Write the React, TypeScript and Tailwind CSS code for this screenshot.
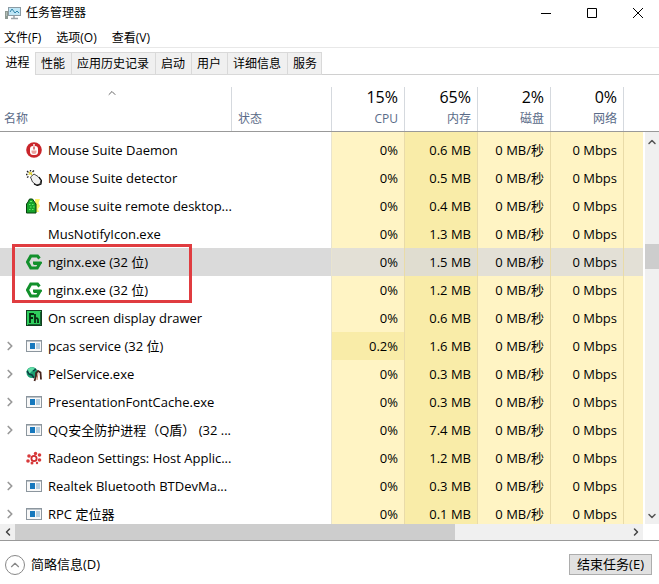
import type { ReactNode } from "react"
import { ChevronDown, ChevronLeft, ChevronRight, ChevronUp } from "lucide-react"

type IconName = "daemon" | "detector" | "remote" | "nginx" | "display" | "app" | "pel" | "radeon" | "none"

type Process = {
	name: string
	icon: IconName
	memory: string
	cpu?: string
	expandable?: boolean
	selected?: boolean
	marked?: boolean
}

const menus = ["文件(F)", "选项(O)", "查看(V)"]

const tabs = ["性能", "应用历史记录", "启动", "用户", "详细信息", "服务"]

const usage = [
	{ label: "CPU", value: "15%" },
	{ label: "内存", value: "65%" },
	{ label: "磁盘", value: "2%" },
	{ label: "网络", value: "0%" },
]

const processes: Process[] = [
	{ name: "Mouse Suite Daemon", icon: "daemon", memory: "0.6 MB" },
	{ name: "Mouse Suite detector", icon: "detector", memory: "0.5 MB" },
	{ name: "Mouse suite remote desktop...", icon: "remote", memory: "0.4 MB" },
	{ name: "MusNotifyIcon.exe", icon: "none", memory: "1.3 MB" },
	{ name: "nginx.exe (32 位)", icon: "nginx", memory: "1.5 MB", selected: true, marked: true },
	{ name: "nginx.exe (32 位)", icon: "nginx", memory: "1.2 MB" },
	{ name: "On screen display drawer", icon: "display", memory: "0.6 MB" },
	{ name: "pcas service (32 位)", icon: "app", memory: "1.6 MB", cpu: "0.2%", expandable: true },
	{ name: "PelService.exe", icon: "pel", memory: "0.3 MB", expandable: true },
	{ name: "PresentationFontCache.exe", icon: "app", memory: "0.3 MB", expandable: true },
	{ name: "QQ安全防护进程（Q盾） (32 ...", icon: "app", memory: "7.4 MB", expandable: true },
	{ name: "Radeon Settings: Host Applic...", icon: "radeon", memory: "1.2 MB" },
	{ name: "Realtek Bluetooth BTDevMa...", icon: "app", memory: "0.3 MB", expandable: true },
	{ name: "RPC 定位器", icon: "app", memory: "0.1 MB", expandable: true },
]

const drawings: Record<IconName, ReactNode> = {
	none: null,
	daemon: (
		<>
			<circle cx="8" cy="8" r="7.8" fill="#c9252b" />
			<rect x="4" y="4" width="8" height="9" rx="3" fill="#fff" />
			<path d="M5.500 8.500h5v1.500a2.500 2 0 0 1-5 0z" fill="#eba09c" />
			<path d="M8 2v2" stroke="#fff" strokeWidth="1.400" />
			<path d="M8 4.500v3" stroke="#c9252b" strokeWidth="1.200" />
		</>
	),
	detector: (
		<>
			<path d="M4.500 7 8 4l4 2.500 3 4-1 3.500-3.500 1-4-3z" fill="#f1f1f1" stroke="#444" />
			<path d="M13 7l2.500 3.500-.5 3.500-3.500 1.500-3.500-1.500" fill="none" stroke="#111" strokeWidth="1.200" />
			<path d="M1 1l1.500 1.500M4.500 0v1.500M8 .5 6.500 2M0 4.500h1.500M1 7.500l1.500-1" stroke="#222" strokeWidth="1.300" />
			<path d="M3 2l3 3M2.500 4.500 6 2.500" stroke="#d8c928" strokeWidth="1.300" />
		</>
	),
	remote: (
		<>
			<path d="M9 1h5l-1.500 4L14 8l-2 3 1 3H9z" fill="#fbf56a" />
			<path d="M3.500 1h3l2 3 1.500 2v9H.5V6L2 4z" fill="#16a32b" stroke="#073f0d" />
			<path d="M4 3h2v1H4zM3 6h1.500v1H3zM6 6h1.500v1H6zM4 8.500h1.500v1H4zM7 8.500h1.500v1H7zM3 11h1.500v1H3zM6 11h1.500v1H6z" fill="#65ec65" />
		</>
	),
	nginx: (
		<>
			<path d="M13.500 4.500 11.500 2H4.800L1.500 8l3.300 6h6.400l2.600-4.500H7.500" fill="none" stroke="#12902c" strokeWidth="3" />
			<path d="M7 7.500h8.500v2.500H7z" fill="#12902c" />
		</>
	),
	display: (
		<>
			<rect x=".5" y=".5" width="15" height="15" fill="#2fcf5d" stroke="#123d20" />
			<path d="M2 14.500h12.500V2" fill="none" stroke="#12602c" />
			<path d="M4 13V4h4M4 8h3M9 4v9M9 9q3-2 3 1v3" fill="none" stroke="#052c10" strokeWidth="1.800" />
		</>
	),
	app: (
		<>
			<rect x=".5" y="2.500" width="15" height="11" fill="#f8f8f8" stroke="#8c969e" />
			<path d="M1 3.500h14" stroke="#bcc3c9" />
			<rect x="4" y="5" width="5" height="6" fill="#1678bd" />
			<path d="M10 6h4M10 8h4M10 10h4" stroke="#75a5c8" />
		</>
	),
	pel: (
		<>
			<circle cx="6" cy="6.500" r="5.500" fill="#1c9f72" />
			<path d="M2 3l4-2 3 2-3 2-3 3z" fill="#65e0a9" />
			<path d="M1 5l2 3 3 1 2 3M7 5l3-2" fill="none" stroke="#0b3f43" strokeWidth="1.500" />
			<path d="M8.500 15 10 10V7l2-2 2.500 1.500.5 7" fill="none" stroke="#45241d" strokeWidth="1.800" />
			<path d="M11 14l1-7" fill="none" stroke="#c77b60" />
		</>
	),
	radeon: (
		<>
			<circle cx="8" cy="8.500" r="2.600" fill="none" stroke="#d02b2e" strokeWidth="1.800" />
			<g fill="#d83a3b">
				<circle cx="3" cy="6" r="1.800" />
				<circle cx="2" cy="11" r="1.800" />
				<circle cx="6" cy="13" r="1.500" />
				<circle cx="9.500" cy="3.500" r="1.700" />
				<circle cx="13.500" cy="5" r="1.800" />
				<circle cx="13.500" cy="10" r="1.800" />
				<circle cx="11" cy="13" r="1.200" />
			</g>
		</>
	),
}

function ProcessIcon({ name }: { name: IconName }) {
	return (
		<svg viewBox="0 0 16 16" className="size-4 shrink-0" aria-hidden="true">
			{drawings[name]}
		</svg>
	)
}

function TitleBar() {
	return (
		<header className="flex h-[26px] shrink-0 items-center overflow-hidden">
			<svg viewBox="0 0 16 16" className="ml-[5px] size-4" aria-hidden="true">
				<rect x="3.500" y="2.500" width="12" height="8" fill="#bfe6f6" stroke="#8b9ba4" />
				<path d="M5 7l2-3 3 4 2-2 2 2" fill="none" stroke="#2f83a8" />
				<path d="M9 11v2M6 13.500h7" stroke="#9aa3a8" strokeWidth="1.500" />
				<rect x="0" y="6" width="3" height="8" fill="#8e9a93" />
				<path d="M1 8h1M1 10h1" stroke="#d9e2dc" />
			</svg>
			<h1 className="ml-[5px] flex-1 text-xs">任务管理器</h1>
			<div className="-mr-0.5 flex">
				<button className="flex h-6 w-[46px] items-center justify-center" aria-label="最小化">
					<svg viewBox="0 0 10 10" className="size-2.5"><path d="M0 5.500h10" stroke="#000" /></svg>
				</button>
				<button className="flex h-6 w-[46px] items-center justify-center" aria-label="最大化">
					<svg viewBox="0 0 10 10" className="size-2.5"><path d="M.5.500h9v9h-9z" fill="none" stroke="#000" /></svg>
				</button>
				<button className="flex h-6 w-[46px] items-center justify-center" aria-label="关闭">
					<svg viewBox="0 0 10 10" className="size-2.5"><path d="M0 0l10 10M10 0 0 10" stroke="#000" /></svg>
				</button>
			</div>
		</header>
	)
}

function ProcessRow({ process, first }: { process: Process; first: boolean }) {
	const pad = first ? "h-8 pt-1" : "h-7"
	const light = process.selected ? "bg-[#e3e0d6]" : "bg-[#fff4c4]"
	const dark = process.selected ? "bg-[#e0ddd0]" : "bg-[#f9eca8]"
	const plain = process.selected ? "bg-[#dadada]" : ""
	const value = `${pad} border-r border-[#e9dba8] pr-1.5 text-right whitespace-nowrap`

	return (
		<tr>
			<td className={`${pad} ${plain} relative`}>
				<div className="flex items-center">
					<div className="flex w-[26px] shrink-0 items-center pl-[3px]">
						{process.expandable && (
							<button aria-label={`展开 ${process.name}`}>
								<ChevronRight className="size-3.5 text-[#999]" strokeWidth={3} />
							</button>
						)}
					</div>
					<ProcessIcon name={process.icon} />
					<span className="ml-1.5 whitespace-nowrap">{process.name}</span>
				</div>
				{/* red frame round both nginx rows */}
				{process.marked && (
					<div className="pointer-events-none absolute -top-1 left-3 z-10 h-[59px] w-[180px] border-3 border-[#e03c40]" />
				)}
			</td>
			<td className={`${pad} ${plain} border-r border-[#e9e4cf]`} />
			<td className={`${value} ${process.cpu ? dark : light}`}>{process.cpu ?? "0%"}</td>
			<td className={`${value} ${dark}`}>{process.memory}</td>
			<td className={`${value} ${light}`}>0 MB/秒</td>
			<td className={`${value} ${light}`}>0 Mbps</td>
			<td className={`${pad} ${light}`} />
		</tr>
	)
}

function ProcessTable() {
	return (
		<div className="flex min-h-0 flex-1 overflow-hidden">
			<div className="min-w-0 flex-1">
				<table className="w-full table-fixed border-separate border-spacing-0 text-[13px] leading-5">
					<colgroup>
						<col className="w-[232px]" />
						<col className="w-[100px]" />
						<col className="w-[73px]" />
						<col className="w-[73px]" />
						<col className="w-[73px]" />
						<col className="w-[73px]" />
						<col />
					</colgroup>
					<thead className="text-xs text-[#5a6b88]">
						<tr>
							<th className="h-[57px] border-b border-[#999] p-0 align-bottom font-normal">
								<div className="flex h-11 flex-col justify-between border-r border-[#d5d9de] pb-0.5 pl-1 text-left">
									<ChevronUp className="mr-3 size-3 self-center text-[#666]" />
									<span className="leading-5">名称</span>
								</div>
							</th>
							<th className="border-b border-[#999] p-0 align-bottom font-normal">
								<div className="flex h-11 items-end border-r border-[#d5d9de] pb-0.5 pl-1.5 leading-5">状态</div>
							</th>
							{usage.map((item) => (
								<th key={item.label} className="border-b border-[#999] p-0 align-bottom font-normal">
									<div className="flex h-11 flex-col items-end justify-between border-r border-[#d5d9de] pr-1.5 pb-0.5">
										<span className="text-base leading-5 text-black">{item.value}</span>
										<span className="leading-5">{item.label}</span>
									</div>
								</th>
							))}
							<th className="border-b border-[#999]" />
						</tr>
					</thead>
					<tbody>
						{processes.map((process, i) => (
							<ProcessRow key={i} process={process} first={i === 0} />
						))}
					</tbody>
				</table>
			</div>
			{/* vertical scroll bar */}
			<div className="flex w-4 shrink-0 flex-col">
				<div className="h-[57px] shrink-0 border-b border-[#999]" />
				<div className="ml-0.5 flex flex-1 flex-col items-center bg-[#f0f0f0]">
					<button className="pt-1" aria-label="向上滚动">
						<ChevronUp className="size-3 text-[#555]" strokeWidth={3} />
					</button>
					<div className="flex-[95]" />
					<div className="h-[25px] w-full bg-[#cdcdcd]" />
					<div className="flex-[238]" />
					<button className="pb-0.5" aria-label="向下滚动">
						<ChevronDown className="size-3 text-[#555]" strokeWidth={3} />
					</button>
				</div>
			</div>
		</div>
	)
}

function App() {
	return (
		<div className="flex h-screen flex-col overflow-hidden bg-white font-['Open_Sans','Noto_Sans_CJK_SC',sans-serif] text-black">
			<TitleBar />
			<nav className="flex h-[22px] shrink-0 items-center gap-[15px] border-b border-[#e8e8e8] pt-0.5 pl-1 text-xs">
				{menus.map((menu) => (
					<button key={menu}>{menu}</button>
				))}
			</nav>
			<div className="flex h-[27px] shrink-0 items-end text-xs" role="tablist">
				<button role="tab" aria-selected="true" className="h-[23px] w-9 border-r border-[#d9d9d9] pb-0.5">进程</button>
				{tabs.map((tab) => (
					<button
						key={tab}
						role="tab"
						aria-selected="false"
						className="h-[23px] border border-l-0 border-[#d9d9d9] bg-[#f0f0f0] pr-1.5 pl-[5px] last-of-type:pr-1"
					>
						{tab}
					</button>
				))}
				<div className="flex-1 border-b border-[#d0d0d0]" />
			</div>
			<ProcessTable />
			{/* horizontal scroll bar */}
			<div className="mr-4 flex h-4 shrink-0 items-center bg-[#f0f0f0]">
				<button className="flex w-[15px] justify-center" aria-label="向左滚动">
					<ChevronLeft className="size-3 text-[#444]" strokeWidth={3} />
				</button>
				<div className="h-full flex-[440] bg-[#cdcdcd]" />
				<div className="flex-[173]" />
				<button className="flex w-[15px] justify-center" aria-label="向右滚动">
					<ChevronRight className="size-3 text-[#444]" strokeWidth={3} />
				</button>
			</div>
			<footer className="flex h-11 shrink-0 items-center justify-between border-t border-[#999] pt-1 pr-[7px] pl-[5px] text-[13px]">
				<button className="flex items-center gap-1.5">
					<span className="flex size-5 items-center justify-center rounded-full border border-[#888]">
						<ChevronUp className="size-3.5 text-[#888]" />
					</span>
					简略信息(D)
				</button>
				<button className="h-[21px] border border-[#adadad] bg-[#e1e1e1] px-[7px] leading-[19px]">结束任务(E)</button>
			</footer>
		</div>
	)
}

export default App
